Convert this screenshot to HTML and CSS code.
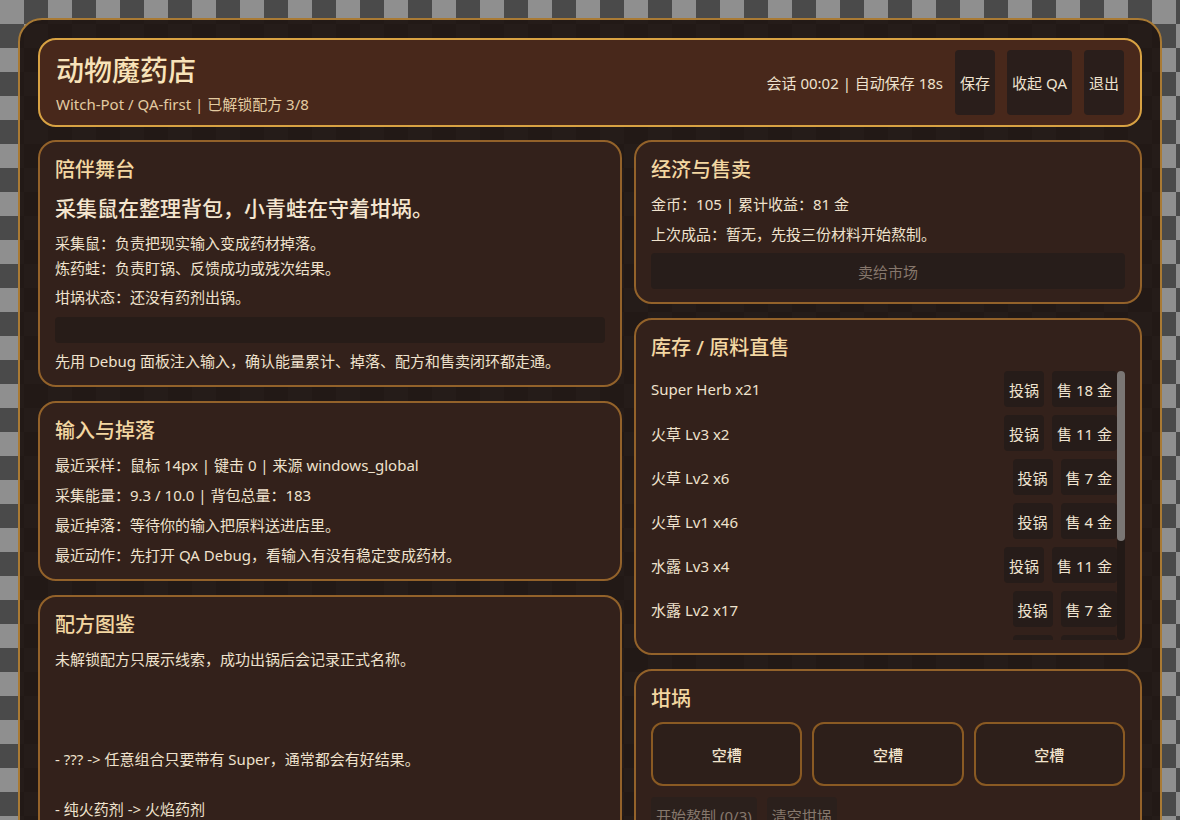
FILE: index.html
```html
<!DOCTYPE html>
<html lang="zh-CN">
<head>
<meta charset="utf-8">
<title>动物魔药店</title>
<link rel="stylesheet" href="styles.css">
</head>
<body>
<div class="app">
  <header class="topbar">
    <div class="brand">
      <h1 class="brand-title">动物魔药店</h1>
      <div class="brand-sub">Witch-Pot / QA-first | 已解锁配方 3/8</div>
    </div>
    <div class="topbar-right">
      <span class="session">会话 00:02 | 自动保存 18s</span>
      <button class="btn">保存</button>
      <button class="btn">收起 QA</button>
      <button class="btn">退出</button>
    </div>
  </header>

  <main class="grid">
    <div class="col">
      <section class="card">
        <h2 class="card-title">陪伴舞台</h2>
        <p class="lead">采集鼠在整理背包，小青蛙在守着坩埚。</p>
        <p class="line role">采集鼠：负责把现实输入变成药材掉落。</p>
        <p class="line role2">炼药蛙：负责盯锅、反馈成功或残次结果。</p>
        <p class="line status">坩埚状态：还没有药剂出锅。</p>
        <div class="status-bar"></div>
        <p class="line hint">先用 Debug 面板注入输入，确认能量累计、掉落、配方和售卖闭环都走通。</p>
      </section>

      <section class="card">
        <h2 class="card-title">输入与掉落</h2>
        <div class="stack">
          <p class="line">最近采样：鼠标 14px | 键击 0 | 来源 windows_global</p>
          <p class="line">采集能量：9.3 / 10.0 | 背包总量：183</p>
          <p class="line">最近掉落：等待你的输入把原料送进店里。</p>
          <p class="line">最近动作：先打开 QA Debug，看输入有没有稳定变成药材。</p>
        </div>
      </section>

      <section class="card">
        <h2 class="card-title">配方图鉴</h2>
        <p class="recipes">未解锁配方只展示线索，成功出锅后会记录正式名称。



- ??? -> 任意组合只要带有 Super，通常都会有好结果。

- 纯火药剂 -> 火焰药剂

- 纯水药剂 -> 清泉药剂

- ??? -> 火与水相遇时，锅里会冒出蒸汽。</p>
      </section>
    </div>

    <div class="col">
      <section class="card">
        <h2 class="card-title">经济与售卖</h2>
        <div class="stack">
          <p class="line">金币：105 | 累计收益：81 金</p>
          <p class="line">上次成品：暂无，先投三份材料开始熬制。</p>
          <button class="btn btn-wide" disabled>卖给市场</button>
        </div>
      </section>

      <section class="card">
        <h2 class="card-title">库存 / 原料直售</h2>
        <div class="inv-wrap">
          <div class="inv-list">
            <div class="inv-row"><span class="inv-name">Super Herb x21</span><div class="inv-actions"><button class="btn">投锅</button><button class="btn">售 18 金</button></div></div>
            <div class="inv-row"><span class="inv-name">火草 Lv3 x2</span><div class="inv-actions"><button class="btn">投锅</button><button class="btn">售 11 金</button></div></div>
            <div class="inv-row"><span class="inv-name">火草 Lv2 x6</span><div class="inv-actions"><button class="btn">投锅</button><button class="btn">售 7 金</button></div></div>
            <div class="inv-row"><span class="inv-name">火草 Lv1 x46</span><div class="inv-actions"><button class="btn">投锅</button><button class="btn">售 4 金</button></div></div>
            <div class="inv-row"><span class="inv-name">水露 Lv3 x4</span><div class="inv-actions"><button class="btn">投锅</button><button class="btn">售 11 金</button></div></div>
            <div class="inv-row"><span class="inv-name">水露 Lv2 x17</span><div class="inv-actions"><button class="btn">投锅</button><button class="btn">售 7 金</button></div></div>
            <div class="inv-row"><span class="inv-name">水露 Lv1 x58</span><div class="inv-actions"><button class="btn">投锅</button><button class="btn">售 4 金</button></div></div>
            <div class="inv-row"><span class="inv-name">月光叶 Lv3 x1</span><div class="inv-actions"><button class="btn">投锅</button><button class="btn">售 11 金</button></div></div>
            <div class="inv-row"><span class="inv-name">月光叶 Lv2 x9</span><div class="inv-actions"><button class="btn">投锅</button><button class="btn">售 7 金</button></div></div>
            <div class="inv-row"><span class="inv-name">月光叶 Lv1 x19</span><div class="inv-actions"><button class="btn">投锅</button><button class="btn">售 4 金</button></div></div>
          </div>
          <div class="scroll-track"><div class="scroll-thumb"></div></div>
        </div>
      </section>

      <section class="card">
        <h2 class="card-title">坩埚</h2>
        <div class="slots">
          <div class="slot">空槽</div>
          <div class="slot">空槽</div>
          <div class="slot">空槽</div>
        </div>
        <div class="pot-actions">
          <button class="btn btn-muted" disabled>开始熬制 (0/3)</button>
          <button class="btn btn-muted" disabled>清空坩埚</button>
        </div>
      </section>
    </div>
  </main>
</div>
</body>
</html>
```

FILE: styles.css
```css
* {
  box-sizing: border-box;
}

html, body {
  margin: 0;
  padding: 0;
}

body {
  font-family: "Noto Sans", "Noto Sans CJK JP", sans-serif;
  color: #efe2cd;
  background-color: #8f8f8f;
  background-image: conic-gradient(#4a4a4a 25%, #8f8f8f 0 50%, #4a4a4a 0 75%, #8f8f8f 0);
  background-size: 48px 48px;
}

.app {
  margin: 18px;
  padding: 18px;
  border: 2px solid #a97a34;
  border-radius: 24px;
  background: rgba(32, 23, 20, 0.96);
  min-height: 1000px;
}

/* ---------- top bar ---------- */
.topbar {
  display: flex;
  justify-content: space-between;
  align-items: stretch;
  padding: 10px 16px;
  border: 2px solid #d8a243;
  border-radius: 18px;
  background: #48281b;
}

.brand {
  display: flex;
  flex-direction: column;
  justify-content: center;
  min-height: 65px;
  gap: 6px;
}

.brand-title {
  margin: 0;
  font-size: 28px;
  line-height: 36px;
  font-weight: 500;
  color: #f8e3b9;
}

.brand-sub {
  font-size: 15px;
  line-height: 20px;
  color: #e3cba1;
}

.topbar-right {
  display: flex;
  align-items: stretch;
  gap: 12px;
}

.session {
  align-self: center;
  font-size: 15px;
  color: #efe2cd;
}

/* ---------- buttons ---------- */
.btn {
  font-family: "Noto Sans", "Noto Sans CJK JP", sans-serif;
  font-size: 15px;
  color: #efe3d0;
  background: #2a1e1b;
  border: none;
  border-radius: 4px;
  padding: 0 5px;
  white-space: nowrap;
}

.btn-wide {
  width: 100%;
  height: 36px;
  background: #271d1a;
  color: #86776c;
}

.btn-muted {
  height: 36px;
  background: #2b201c;
  color: #86786d;
}

/* ---------- grid ---------- */
.grid {
  display: grid;
  grid-template-columns: 1.15fr 1fr;
  column-gap: 12px;
  margin-top: 13px;
  align-items: start;
}

.col {
  display: flex;
  flex-direction: column;
  gap: 14px;
}

.card {
  border: 2px solid #93622a;
  border-radius: 18px;
  background: #33211b;
  padding: 14px 15px 13px;
}

.card-title {
  margin: 0 0 9px;
  font-size: 20px;
  line-height: 28px;
  font-weight: 500;
  color: #f3d7a2;
}

.line {
  margin: 0;
  font-size: 15px;
  line-height: 22px;
  color: #efe2cd;
}

.stack {
  display: flex;
  flex-direction: column;
  gap: 8px;
}

/* stage card */
.lead {
  margin: 10px 0 10px;
  font-size: 21px;
  line-height: 28px;
  font-weight: 500;
  color: #f5e6cf;
}

.role2 {
  margin-top: 3px;
}

.status {
  margin-top: 7px;
}

.status-bar {
  height: 26px;
  margin: 9px 0 7px;
  border-radius: 4px;
  background: #271c18;
}

/* recipes */
.recipes {
  margin: -1px 0 0;
  font-size: 15px;
  line-height: 25px;
  white-space: pre-wrap;
  color: #efe2cd;
}

/* inventory */
.inv-wrap {
  display: flex;
  height: 269px;
}

.inv-list {
  flex: 1;
  display: flex;
  flex-direction: column;
  gap: 8px;
  overflow: hidden;
}

.scroll-track {
  flex: 0 0 8px;
  background: #221916;
  border-radius: 4px;
}

.scroll-thumb {
  height: 170px;
  background: #7a7674;
  border-radius: 4px;
}

.inv-row {
  display: flex;
  justify-content: space-between;
  align-items: center;
  flex: 0 0 36px;
  height: 36px;
}

.inv-name {
  font-size: 15px;
  color: #efe2cd;
}

.inv-actions {
  display: flex;
  gap: 8px;
  height: 36px;
}

.inv-actions .btn {
  background: #261c19;
}

/* cauldron */
.slots {
  display: grid;
  grid-template-columns: repeat(3, 1fr);
  gap: 10px;
}

.slot {
  height: 64px;
  display: flex;
  align-items: center;
  justify-content: center;
  border: 2px solid #8a5a23;
  border-radius: 12px;
  background: #2d1f1a;
  font-size: 15px;
  font-weight: 500;
  color: #f1e3cc;
}

.pot-actions {
  display: flex;
  gap: 10px;
  margin-top: 11px;
}
```
